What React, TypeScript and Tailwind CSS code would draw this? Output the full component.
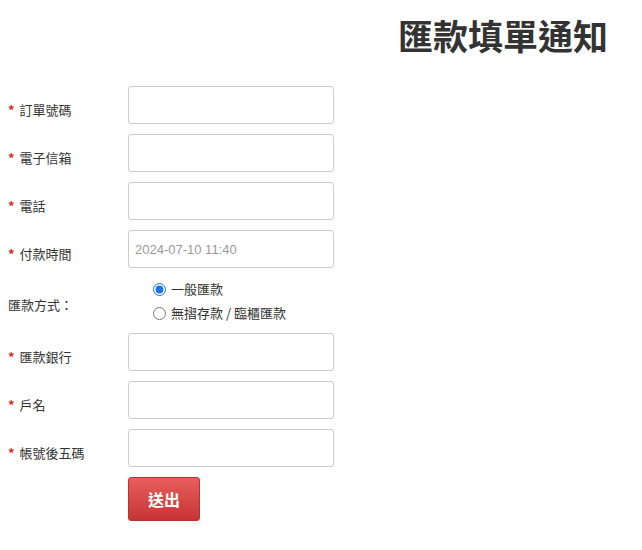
import React, { useState } from 'react';

const font = { fontFamily: '"Noto Sans CJK TC", "Liberation Sans", sans-serif' };

function Field({ label, required = true, placeholder }: { label: string; required?: boolean; placeholder?: string }) {
  return (
    <div className="flex">
      <div className="w-[120px] pt-[15px] text-[13px] leading-[18px] text-[#333]">
        {required && <span className="text-[#d9262b] font-bold mr-[5px]">*</span>}
        {label}
      </div>
      <input
        type="text"
        placeholder={placeholder}
        className="w-[206px] h-[38px] border border-[#ccc] rounded-[3px] px-[6px] text-[13px] text-[#555] placeholder:text-[#999] outline-none"
        style={{ fontFamily: '"Liberation Sans", "Noto Sans CJK TC", sans-serif' }}
      />
    </div>
  );
}

export default function App() {
  const [method, setMethod] = useState('normal');

  return (
    <div className="w-[642px] h-[550px] bg-white" style={font}>
      <h1 className="text-right pr-[34px] pt-[12px] text-[35px] leading-[46px] font-bold text-[#333]">匯款填單通知</h1>
      <form className="flex flex-col gap-[10px] pl-[8px] mt-[28px]" onSubmit={(e) => e.preventDefault()}>
        <Field label="訂單號碼" />
        <Field label="電子信箱" />
        <Field label="電話" />
        <Field label="付款時間" placeholder="2024-07-10 11:40" />
        <div className="flex h-[45px]">
          <div className="w-[120px] pt-[18px] text-[13px] leading-[18px] text-[#333]">匯款方式：</div>
          <div className="flex flex-col gap-[6px] pl-[25px] pt-[2px] text-[13px] leading-[18px] text-[#333]">
            <label className="flex items-center gap-[5px]">
              <input
                type="radio"
                name="method"
                className="w-[13px] h-[13px] m-0 accent-[#1a73e8]"
                checked={method === 'normal'}
                onChange={() => setMethod('normal')}
              />
              一般匯款
            </label>
            <label className="flex items-center gap-[5px]">
              <input
                type="radio"
                name="method"
                className="w-[13px] h-[13px] m-0"
                checked={method === 'atm'}
                onChange={() => setMethod('atm')}
              />
              無摺存款 / 臨櫃匯款
            </label>
          </div>
        </div>
        <Field label="匯款銀行" />
        <Field label="戶名" />
        <Field label="帳號後五碼" />
        <div className="pl-[120px]">
          <button
            type="submit"
            className="w-[72px] h-[44px] rounded-[3px] border border-[#b83232] bg-gradient-to-b from-[#e85d5d] to-[#c63434] text-white text-[16px] font-bold"
          >
            送出
          </button>
        </div>
      </form>
    </div>
  );
}
